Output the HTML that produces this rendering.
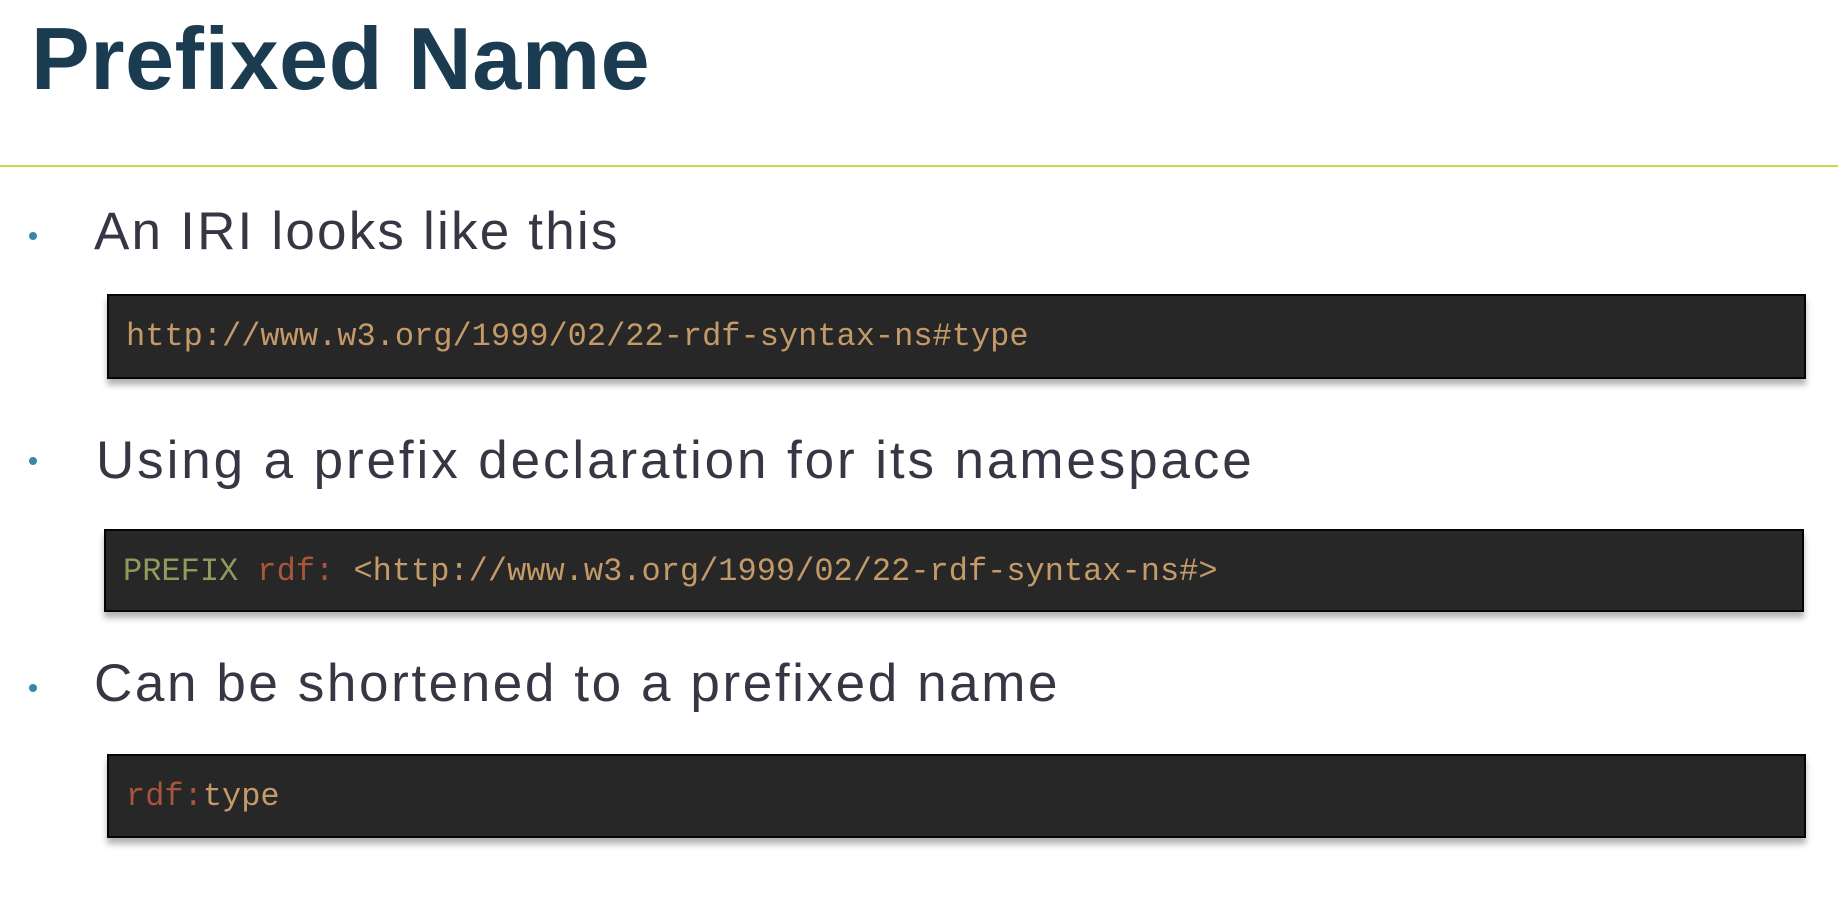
<!DOCTYPE html>
<html><head><meta charset="utf-8"><style>
html,body{margin:0;padding:0;background:#fff;width:1838px;height:904px;overflow:hidden;position:relative}
.t{position:absolute;left:31px;top:15px;font:bold 88px/1 "Liberation Sans",sans-serif;color:#1a3b50;letter-spacing:0.6px;white-space:nowrap}
.line{position:absolute;left:0;top:165px;width:1838px;height:2px;background:#c9d94c}
.b{position:absolute;font:53px/1 "Liberation Sans",sans-serif;color:#363644;letter-spacing:2.9px;white-space:nowrap}
.dot{position:absolute;width:8px;height:8px;border-radius:50%;background:#3a86a8}
.c{position:absolute;background:#272727;border:2px solid #050505;box-shadow:0 6px 6px rgba(0,0,0,0.3);box-sizing:border-box}
.c .s{position:absolute;left:17px;font:32px/1 "Liberation Mono",monospace;white-space:pre;color:#c49a68}
.c .g{color:#8f9a5c}.c .r{color:#a9553a}
</style></head><body>
<div class="t">Prefixed Name</div>
<div class="line"></div>
<div class="dot" style="left:29px;top:232px"></div>
<div class="b" style="left:94px;top:205px;letter-spacing:2.2px">An IRI looks like this</div>
<div class="c" style="left:107px;top:294px;width:1699px;height:85px"><span class="s" style="top:25px">http://www.w3.org/1999/02/22-rdf-syntax-ns#type</span></div>
<div class="dot" style="left:29px;top:457px"></div>
<div class="b" style="left:96px;top:434px">Using a prefix declaration for its namespace</div>
<div class="c" style="left:104px;top:529px;width:1700px;height:83px"><span class="s" style="top:25px"><span class="g">PREFIX</span> <span class="r">rdf:</span> &lt;http://www.w3.org/1999/02/22-rdf-syntax-ns#&gt;</span></div>
<div class="dot" style="left:29px;top:684px"></div>
<div class="b" style="left:94px;top:657px;letter-spacing:2.6px">Can be shortened to a prefixed name</div>
<div class="c" style="left:107px;top:754px;width:1699px;height:84px"><span class="s" style="top:25px"><span class="r">rdf:</span>type</span></div>
</body></html>
